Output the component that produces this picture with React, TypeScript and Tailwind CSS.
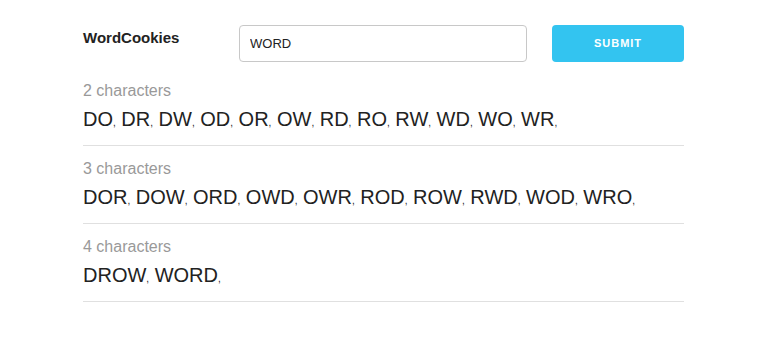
import { useState } from "react";

const groups = [
  { size: 2, words: ["DO", "DR", "DW", "OD", "OR", "OW", "RD", "RO", "RW", "WD", "WO", "WR"] },
  { size: 3, words: ["DOR", "DOW", "ORD", "OWD", "OWR", "ROD", "ROW", "RWD", "WOD", "WRO"] },
  { size: 4, words: ["DROW", "WORD"] },
];

const App = () => {
  const [word, setWord] = useState("WORD");

  return (
    <div className="min-h-screen bg-white font-['Liberation_Sans',Arial,sans-serif]">
      <div className="w-[601px] mx-auto pt-[25px]">
        {/* header */}
        <div className="flex items-start">
          <div className="w-[156px] mt-[3px] text-[15px] leading-[20px] font-bold text-[#222]">
            WordCookies
          </div>
          <input
            className="w-[288px] h-[37px] px-[10px] text-[13px] text-[#222] border border-[#c8c8c8] rounded-[4px] outline-none"
            value={word}
            onChange={(e) => setWord(e.target.value.toUpperCase())}
          />
          <button className="ml-[25px] w-[132px] h-[37px] rounded-[4px] bg-[#33c4f0] text-white text-[11px] font-bold tracking-[1px] uppercase">
            Submit
          </button>
        </div>

        {/* results */}
        <div className="mt-[6px]">
          {groups.map((g) => (
            <div key={g.size} className="pt-[11px] pb-[12px] border-b border-[#e0e0e0]">
              <div className="text-base leading-6 text-[#999]">{g.size} characters</div>
              <div className="mt-[2px] text-xl leading-7 text-[#222]">
                {g.words.map((w, i) => (
                  <span key={w}>
                    {w}
                    <span className="text-[10px] leading-none">,</span>
                    {i < g.words.length - 1 ? " " : ""}
                  </span>
                ))}
              </div>
            </div>
          ))}
        </div>
      </div>
    </div>
  );
};

export default App;
